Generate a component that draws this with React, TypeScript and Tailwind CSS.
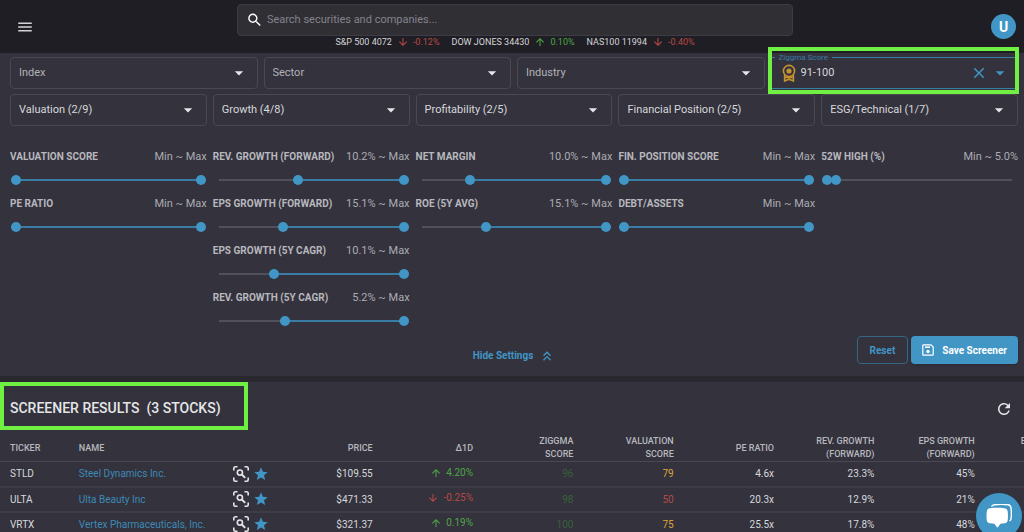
import React, { useState } from 'react';
import {
  MdArrowDownward,
  MdArrowDropDown,
  MdArrowUpward,
  MdClose,
  MdKeyboardDoubleArrowUp,
  MdMenu,
  MdRefresh,
  MdSearch,
  MdStar,
} from 'react-icons/md';

type Metric = {
  label: string;
  value: string;
  low: number;
  high: number;
};

type MetricGroup = {
  title: string;
  metrics: Metric[];
};

const groups: MetricGroup[] = [
  {
    title: 'Valuation (2/9)',
    metrics: [
      { label: 'VALUATION SCORE', value: 'Min ~ Max', low: 0, high: 100 },
      { label: 'PE RATIO', value: 'Min ~ Max', low: 0, high: 100 },
    ],
  },
  {
    title: 'Growth (4/8)',
    metrics: [
      { label: 'REV. GROWTH (FORWARD)', value: '10.2% ~ Max', low: 43, high: 100 },
      { label: 'EPS GROWTH (FORWARD)', value: '15.1% ~ Max', low: 35, high: 100 },
      { label: 'EPS GROWTH (5Y CAGR)', value: '10.1% ~ Max', low: 30, high: 100 },
      { label: 'REV. GROWTH (5Y CAGR)', value: '5.2% ~ Max', low: 36, high: 100 },
    ],
  },
  {
    title: 'Profitability (2/5)',
    metrics: [
      { label: 'NET MARGIN', value: '10.0% ~ Max', low: 26, high: 100 },
      { label: 'ROE (5Y AVG)', value: '15.1% ~ Max', low: 35, high: 100 },
    ],
  },
  {
    title: 'Financial Position (2/5)',
    metrics: [
      { label: 'FIN. POSITION SCORE', value: 'Min ~ Max', low: 0, high: 100 },
      { label: 'DEBT/ASSETS', value: 'Min ~ Max', low: 0, high: 100 },
    ],
  },
  {
    title: 'ESG/Technical (1/7)',
    metrics: [{ label: '52W HIGH (%)', value: 'Min ~ 5.0%', low: 0, high: 5 }],
  },
];

const indices = [
  { name: 'S&P 500 4072', change: '-0.12%', up: false },
  { name: 'DOW JONES 34430', change: '0.10%', up: true },
  { name: 'NAS100 11994', change: '-0.40%', up: false },
];

const stocks = [
  { ticker: 'STLD', name: 'Steel Dynamics Inc.', price: '$109.55', change: '4.20%', up: true, score: '96', valuation: '79', valuationColor: 'text-[#dea637]', pe: '4.6x', rev: '23.3%', eps: '45%' },
  { ticker: 'ULTA', name: 'Ulta Beauty Inc', price: '$471.33', change: '-0.25%', up: false, score: '98', valuation: '50', valuationColor: 'text-[#b64a45]', pe: '20.3x', rev: '12.9%', eps: '21%' },
  { ticker: 'VRTX', name: 'Vertex Pharmaceuticals, Inc.', price: '$321.37', change: '0.19%', up: true, score: '100', valuation: '75', valuationColor: 'text-[#dea637]', pe: '25.5x', rev: '17.8%', eps: '48%' },
];

const MedalIcon = () => (
  <svg viewBox="0 0 14 18" className="h-[18px] w-[14px] shrink-0" fill="none" stroke="#c4932f" strokeWidth="1.6" aria-hidden="true">
    <circle cx="7" cy="7" r="5.6" />
    <circle cx="7" cy="7" r="1.8" fill="#c4932f" />
    <path d="M2.6 11v6L7 15.2l4.4 1.8v-6M3 13.5h8" />
  </svg>
);

const ScanIcon = () => (
  <svg viewBox="0 0 16 16" className="size-4" fill="none" stroke="currentColor" strokeWidth="1.6" aria-hidden="true">
    <path d="M.8 4.5V2.3A1.5 1.5 0 0 1 2.3.8h2.2M11.5.8h2.2a1.5 1.5 0 0 1 1.5 1.5v2.2M15.2 11.5v2.2a1.5 1.5 0 0 1-1.5 1.5h-2.2M4.5 15.2H2.3a1.5 1.5 0 0 1-1.5-1.5v-2.2" />
    <circle cx="6.9" cy="6.6" r="2.6" />
    <path d="m8.8 8.5 3.4 3.4" strokeWidth="1.9" />
  </svg>
);

const SaveIcon = () => (
  <svg viewBox="0 0 12 12" className="size-3" fill="none" stroke="currentColor" strokeWidth="1.2" aria-hidden="true">
    <path d="M1.6.8h7.3l2.3 2.3v7.3a.8.8 0 0 1-.8.8H1.6a.8.8 0 0 1-.8-.8V1.6a.8.8 0 0 1 .8-.8Z" />
    <path d="M3 3.2h5" strokeWidth="1.6" />
    <circle cx="6" cy="7.5" r="1.7" fill="currentColor" stroke="none" />
  </svg>
);

const ChatIcon = () => (
  <svg viewBox="0 0 26 24" className="h-6 w-[26px]" aria-hidden="true">
    <path d="M5.500 2.600C6 1.300 7 .8 8.500.7c4.700-.5 9-.5 13.500.1 1.700.2 2.700 1.200 3 3 .5 4 .5 7.500 0 11-.2 1-.7 1.700-1.500 2.100" fill="none" stroke="white" strokeWidth="1.400" />
    <path d="M4 4.200c4.800-.6 9.800-.6 14.500 0 2 .3 3 1.400 3.200 3.200.4 3.200.4 5.800 0 8.800-.2 1.700-1.200 2.800-3.200 3.100l-4 .4-3.100 4-3.100-4L4 19.300c-2-.3-3-1.400-3.200-3.100-.4-3-.4-5.600 0-8.800C1 5.600 2 4.500 4 4.200Z" fill="white" />
  </svg>
);

const Change = ({ up, children }: { up: boolean; children: React.ReactNode }) => (
  <span className={`inline-flex items-center gap-1 ${up ? 'text-[#4fa544]' : 'text-[#b64a45]'}`}>
    {up ? <MdArrowUpward className="size-3" /> : <MdArrowDownward className="size-3" />}
    {children}
  </span>
);

const Dropdown = ({ label, muted }: { label: string; muted?: boolean }) => (
  <div className="relative flex h-8 items-center rounded border border-[#494853]">
    <select
      aria-label={label}
      className={`h-full w-full appearance-none bg-transparent px-2 text-[11px] outline-none ${muted ? 'text-[#b3b3b8]' : 'text-[#d8d8db]'}`}
    >
      <option>{label}</option>
    </select>
    <MdArrowDropDown className="pointer-events-none absolute right-2 size-5 text-[#e6e6e8]" />
  </div>
);

const thumb =
  'pointer-events-none absolute inset-x-0 top-0 h-[10px] w-full appearance-none bg-transparent [&::-webkit-slider-thumb]:pointer-events-auto [&::-webkit-slider-thumb]:size-[10px] [&::-webkit-slider-thumb]:appearance-none [&::-webkit-slider-thumb]:rounded-full [&::-webkit-slider-thumb]:bg-[#4196c6]';

const RangeSlider = ({ metric }: { metric: Metric }) => {
  const [low, setLow] = useState(metric.low);
  const [high, setHigh] = useState(metric.high);

  return (
    <div className="h-[47px]">
      <div className="flex justify-between whitespace-nowrap leading-4">
        <span className="text-[10px] font-bold text-[#b8b8bd]">{metric.label}</span>
        <span className="text-[11px] text-[#acacb2]">{metric.value}</span>
      </div>
      <div className="relative mx-px mt-[10px] h-[10px]">
        <div className="mx-[5px] h-full py-1">
          <div className="h-0.5 bg-[#52515b]">
            <div className="h-full bg-[#397da5]" style={{ marginLeft: `${low}%`, width: `${high - low}%` }} />
          </div>
        </div>
        <input type="range" aria-label={`${metric.label} minimum`} value={low} onChange={(e) => setLow(Math.min(Number(e.target.value), high))} className={thumb} />
        <input type="range" aria-label={`${metric.label} maximum`} value={high} onChange={(e) => setHigh(Math.max(Number(e.target.value), low))} className={thumb} />
      </div>
    </div>
  );
};

const Header = () => (
  <header className="relative flex h-[53px] justify-center bg-[#1f1e24] pl-1.5">
    <button aria-label="Menu" className="absolute left-4 top-[18px]">
      <MdMenu className="size-[18px] text-[#d4d4d7]" />
    </button>
    <div className="flex w-[54.7%] flex-col items-center pt-1">
      <label className="flex h-8 w-full shrink-0 items-center gap-1 rounded border border-[#3c3b46] bg-[#302f34] pl-2">
        <MdSearch className="size-[18px] text-white" />
        <input
          aria-label="Search"
          placeholder="Search securities and companies..."
          className="w-full bg-transparent text-[11px] text-white outline-none placeholder:text-[#84838f]"
        />
      </label>
      <div className="flex gap-3 whitespace-nowrap text-[9px] leading-3 text-[#d5d5d8]">
        {indices.map((index) => (
          <span key={index.name} className="flex items-center gap-[5px]">
            {index.name}
            <Change up={index.up}>{index.change}</Change>
          </span>
        ))}
      </div>
    </div>
    <button aria-label="Account" className="absolute right-2 top-3.5 size-[25px] rounded-full bg-[#4196c6] text-sm font-bold text-white">
      U
    </button>
  </header>
);

const ScoreFilter = () => (
  <div className="relative h-8">
    <div className="absolute -bottom-[5px] -left-[3px] -right-px -top-[10px] border-4 border-[#6ff043]" />
    <div className="relative ml-px mr-[3px] flex h-full items-center border-y border-[#397da5] pl-2.5 pr-[5px]">
      <label htmlFor="ziggma-score" className="absolute -top-[5px] left-[3px] bg-[#33323d] px-1 text-[8px] leading-[10px] text-[#397da5]">
        Ziggma Score
      </label>
      <MedalIcon />
      <select id="ziggma-score" className="ml-[5px] min-w-0 grow appearance-none bg-transparent text-[11px] text-[#d8d8db] outline-none">
        <option>91-100</option>
      </select>
      <button aria-label="Clear score" className="mr-0.5 text-[#4196c6]">
        <MdClose className="size-[18px]" />
      </button>
      <MdArrowDropDown className="size-5 text-[#4196c6]" />
    </div>
  </div>
);

const th = 'text-right align-middle font-medium';

const App: React.FC = () => {
  return (
    <div className="h-screen overflow-hidden bg-[#33323d] font-[Roboto,sans-serif] text-[#d8d8db]">
      <Header />

      <section className="pl-[10px] pr-1.5 pt-1">
        <div className="grid grid-cols-4 gap-1.5">
          <Dropdown label="Index" muted />
          <Dropdown label="Sector" muted />
          <Dropdown label="Industry" muted />
          <ScoreFilter />
        </div>
        <div className="mt-[5px] grid h-[238px] grid-cols-5 content-start gap-1.5">
          {groups.map((group) => (
            <div key={group.title}>
              <Dropdown label={group.title} />
              <div className="mt-[23px]">
                {group.metrics.map((metric) => (
                  <RangeSlider key={metric.label} metric={metric} />
                ))}
              </div>
            </div>
          ))}
        </div>
        <div className="grid h-11 grid-cols-[1fr_auto_1fr] items-start">
          <button className="col-start-2 mt-4 flex items-center gap-1.5 text-[10px] font-bold leading-4 text-[#4196c6]">
            Hide Settings
            <MdKeyboardDoubleArrowUp className="size-4" />
          </button>
          <div className="mt-1 flex justify-end gap-[3px] text-[10px] font-bold">
            <button className="h-7 rounded border border-[#376786] px-3 text-[#4196c6]">Reset</button>
            <button className="flex h-7 items-center gap-2 rounded bg-[#4196c6] px-[11px] text-white shadow">
              <SaveIcon />
              Save Screener
            </button>
          </div>
        </div>
      </section>

      <div className="h-1.5 bg-[#29282f]" />

      <section>
        <div className="flex h-[53px] items-start justify-between pr-[11px]">
          <h1 className="flex h-12 w-[248px] items-center whitespace-pre border-4 border-[#6ff043] pl-1.5 pt-1 text-[14px] font-medium text-[#e6e6e8]">
            SCREENER RESULTS  (3 STOCKS)
          </h1>
          <button aria-label="Refresh" className="mt-[18px]">
            <MdRefresh className="size-[18px] text-[#e6e6e8]" />
          </button>
        </div>
        <table className="w-full table-fixed border-collapse whitespace-nowrap text-[10px]">
          <colgroup>
            <col className="w-[7.7%]" />
            <col className="w-[14.6%]" />
            <col className="w-[5%]" />
            <col className="w-[9.1%]" />
            <col className="w-[9.8%]" />
            <col className="w-[9.8%]" />
            <col className="w-[9.8%]" />
            <col className="w-[9.8%]" />
            <col className="w-[9.8%]" />
            <col className="w-[9.8%]" />
            <col className="w-[4.8%]" />
          </colgroup>
          <thead className="text-[9px] leading-[13px] text-[#b8b8bd]">
            <tr className="h-[26px] border-b border-[#494853]">
              <th className="pl-2.5 text-left font-medium">TICKER</th>
              <th className="text-left font-medium">NAME</th>
              <th />
              <th className={th}>PRICE</th>
              <th className={th}>Δ1D</th>
              <th className={th}>ZIGGMA<br />SCORE</th>
              <th className={th}>VALUATION<br />SCORE</th>
              <th className={th}>PE RATIO</th>
              <th className={th}>REV. GROWTH<br />(FORWARD)</th>
              <th className={th}>EPS GROWTH<br />(FORWARD)</th>
              <th className="pl-[46px] text-left align-top font-medium">EPS</th>
            </tr>
          </thead>
          <tbody>
            {stocks.map((stock) => (
              <tr key={stock.ticker} className="h-[25px] border-b-2 border-[#3d3c47] text-right">
                <td className="pl-2.5 text-left">{stock.ticker}</td>
                <td className="text-left">
                  <a href="#" className="text-[#3d8ab6]">{stock.name}</a>
                </td>
                <td>
                  <div className="flex items-center gap-1 pl-[5px]">
                    <button aria-label={`Analyze ${stock.ticker}`} className="text-[#e6e6e8]"><ScanIcon /></button>
                    <button aria-label={`Watch ${stock.ticker}`} className="text-[#4196c6]"><MdStar className="size-4" /></button>
                  </div>
                </td>
                <td>{stock.price}</td>
                <td><Change up={stock.up}>{stock.change}</Change></td>
                <td className="text-[#38613a]">{stock.score}</td>
                <td className={stock.valuationColor}>{stock.valuation}</td>
                <td>{stock.pe}</td>
                <td>{stock.rev}</td>
                <td>{stock.eps}</td>
                <td />
              </tr>
            ))}
          </tbody>
        </table>
      </section>

      <button aria-label="Open chat" className="fixed -bottom-[7px] right-0.5 flex size-[46px] items-center justify-center rounded-full bg-[#4196c6] shadow-lg">
        <ChatIcon />
      </button>
    </div>
  );
};

export default App;
